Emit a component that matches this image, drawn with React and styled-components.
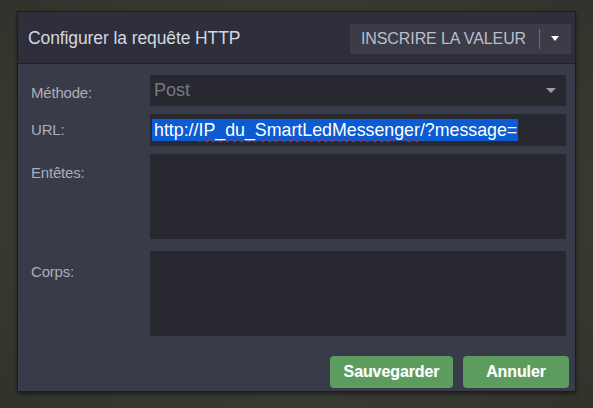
import React from "react";
import styled, { createGlobalStyle } from "styled-components";

const Global = createGlobalStyle`
  html, body { margin: 0; padding: 0; }
  body {
    width: 593px; height: 408px; overflow: hidden;
    background: radial-gradient(ellipse at 50% 50%, #3f4236 0%, #383b31 60%, #30332b 100%);
    font-family: "Liberation Sans", Arial, sans-serif;
  }
`;

const Page = styled.div`
  padding: 11px 0 0 17px;
`;

const Dialog = styled.div`
  width: 559px;
  height: 381px;
  box-sizing: border-box;
  border: 1px solid #1c1d23;
  background: #3a3b48;
  box-shadow: 0 2px 4px rgba(0,0,0,0.45);
  display: flex;
  flex-direction: column;
`;

const Header = styled.div`
  height: 52px;
  box-sizing: border-box;
  background: #2e2f3a;
  border-bottom: 1px solid #1f2028;
  display: flex;
  align-items: center;
  justify-content: space-between;
  padding: 2px 4px 0 10px;
`;

const Title = styled.div`
  color: #d4d8e2;
  font-size: 17.5px;
  letter-spacing: -0.1px;
`;

const SplitButton = styled.div`
  display: flex;
  align-items: center;
  height: 30px;
  background: #3b3c48;
  padding: 0 12px 0 11px;
  box-sizing: border-box;
  width: 221px;
`;

const SplitLabel = styled.span`
  color: #b8bfcd;
  font-size: 16px;
  letter-spacing: -0.1px;
  flex: 1;
  white-space: nowrap;
`;

const SplitDivider = styled.span`
  width: 1px;
  height: 20px;
  background: #6b6d78;
  margin: 0 11px 0 6px;
`;

const Caret = styled.span`
  width: 0; height: 0;
  border-left: ${p => p.$w || 5}px solid transparent;
  border-right: ${p => p.$w || 5}px solid transparent;
  border-top: 5px solid ${p => p.$color || "#ffffff"};
`;

const Body = styled.div`
  flex: 1;
  display: flex;
  flex-direction: column;
  padding: 11px 9px 0 13px;
`;

const Form = styled.div`
  display: grid;
  grid-template-columns: 119px 416px;
  row-gap: 8px;
`;

const Label = styled.div`
  color: #a9aebb;
  font-size: 15px;
  line-height: 16px;
  letter-spacing: -0.2px;
  padding-top: ${p => p.$top || 10}px;
`;

const Field = styled.div`
  background: #282830;
  height: ${p => p.$h}px;
  margin-top: ${p => p.$mt || 0}px;
  box-sizing: border-box;
  display: flex;
  align-items: center;
  padding: 0 ${p => p.$pr || 4}px 0 4px;
`;

const SelectText = styled.span`
  flex: 1;
  color: #767884;
  font-size: 18px;
`;

const Selected = styled.span`
  background: #0b5bd3;
  color: #ffffff;
  font-size: 17.8px;
  line-height: 22px;
  margin-left: -2px;
  padding: 0 1px 0 2px;
`;

const Misspelled = styled.span`
  text-decoration: underline wavy #e0201c;
  text-decoration-thickness: 1px;
  text-underline-offset: 2px;
`;

const Footer = styled.div`
  display: flex;
  justify-content: flex-end;
  gap: 10px;
  margin: 20px -3px 0 0;
`;

const Btn = styled.button`
  width: ${p => p.$w}px;
  height: 32px;
  border: none;
  border-radius: 4px;
  background: #5c9c5e;
  color: #ffffff;
  font-family: "Liberation Sans", Arial, sans-serif;
  font-size: 16px;
  font-weight: 700;
  letter-spacing: -0.1px;
  padding: 0;
  text-shadow: 0 0 1px rgba(255,255,255,0.3);
`;

export default function App() {
  return (
    <>
      <Global />
      <Page>
        <Dialog>
          <Header>
            <Title>Configurer la requête HTTP</Title>
            <SplitButton>
              <SplitLabel>INSCRIRE LA VALEUR</SplitLabel>
              <SplitDivider />
              <Caret $w={4} />
            </SplitButton>
          </Header>
          <Body>
            <Form>
              <Label $top={10}>Méthode:</Label>
              <Field $h={31} $pr={10}>
                <SelectText>Post</SelectText>
                <Caret $color="#9a9ca6" $w={5.5} />
              </Field>
              <Label $top={8}>URL:</Label>
              <Field $h={32} $pr={4}>
                <Selected>
                  http://<Misspelled>IP_du_SmartLedMessenger</Misspelled>/?message=
                </Selected>
              </Field>
              <Label $top={11}>Entêtes:</Label>
              <Field $h={85} />
              <Label $top={13} style={{ marginTop: 4 }}>Corps:</Label>
              <Field $h={85} $mt={4} />
            </Form>
            <Footer>
              <Btn $w={123}>Sauvegarder</Btn>
              <Btn $w={106}>Annuler</Btn>
            </Footer>
          </Body>
        </Dialog>
      </Page>
    </>
  );
}
